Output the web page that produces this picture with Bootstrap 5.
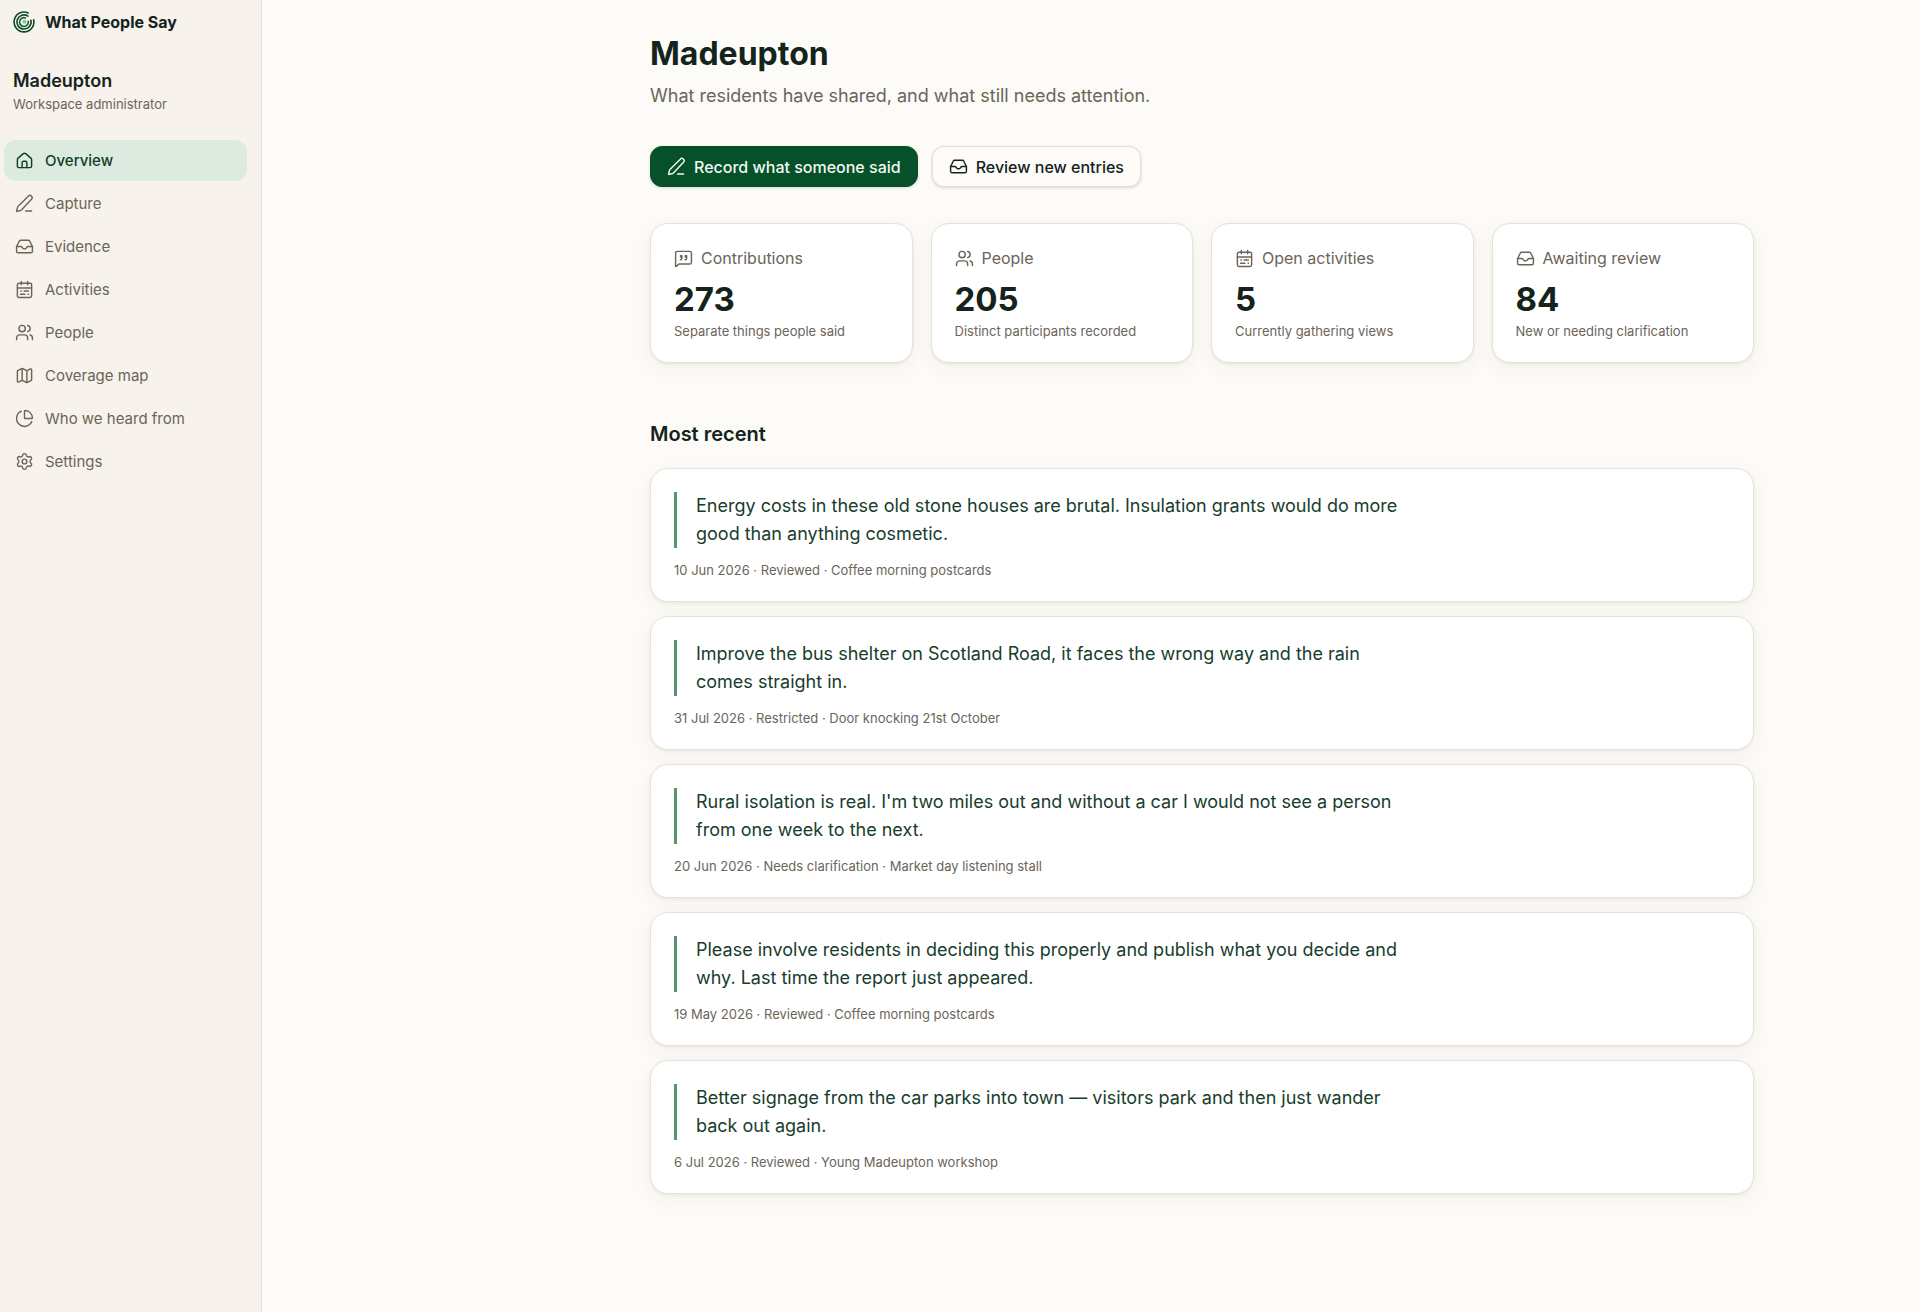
<!DOCTYPE html>
<html lang="en">
<head>
<meta charset="utf-8">
<meta name="viewport" content="width=device-width, initial-scale=1">
<title>Madeupton · What People Say</title>
<link href="https://cdn.jsdelivr.net/npm/bootstrap@5.3.0/dist/css/bootstrap.min.css" rel="stylesheet">
<style>
:root{--ink:#14231b;--muted-ink:#6b6459;--line:#ebe0d8;--paper:#fcfbf7;--sand:#f7f2eb;--leaf:#06502a}
body{font-family:Inter,"Liberation Sans",sans-serif;font-size:16px;line-height:24px;color:var(--ink);background:var(--paper)}
.ico{width:19px;height:19px;flex:none;fill:none;stroke:currentColor;stroke-width:1.8;stroke-linecap:round;stroke-linejoin:round}
.side{width:262px;flex:none;background:var(--sand);border-right:1px solid var(--line);padding:11px 14px 24px 4px}
.brand{gap:10px;padding-left:9px;font-weight:700;line-height:22px;color:var(--ink);text-decoration:none}
.brand svg{width:22px;height:22px;flex:none}
.workspace{margin:36px 0 25px;padding-left:9px}
.workspace-name{font-size:18px;font-weight:600;line-height:24px}
.workspace-role{font-size:13px;line-height:22px;color:var(--muted-ink)}
.side .nav{gap:2px}
.side .nav-link{display:flex;align-items:center;gap:11px;height:41px;padding:0 11px;border-radius:12px;font-size:15px;color:var(--muted-ink)}
.side .nav-link.active{background:#dceadf;color:#0f4027;font-weight:500}
.page{padding:34px 0 48px 222px}
.page-inner{max-width:1104px}
h1{font-size:32px;line-height:40px;font-weight:700;margin:0 0 8px}
.intro{font-size:18px;line-height:28px;color:var(--muted-ink);margin:0 0 36px}
.actions{gap:14px;margin-bottom:36px}
.actions .btn{display:flex;align-items:center;gap:8px;height:41px;padding:0 16px;border-radius:12px;font-size:16px;font-weight:500;box-shadow:0 1px 3px rgba(60,45,30,.18)}
.btn-leaf,.btn-leaf:hover{background:var(--leaf);border-color:var(--leaf);color:#f2f8f2}
.btn-plain,.btn-plain:hover{background:#fdfcf9;border-color:#e7dcd3;color:var(--ink)}
.stats{display:grid;grid-template-columns:repeat(4,1fr);gap:18px}
.tile{border:1px solid var(--line);border-radius:18px;background:#fff;box-shadow:0 1px 3px rgba(80,60,40,.08),0 6px 20px rgba(80,60,40,.05);padding:22px 23px 21px}
.tile-label{gap:8px;color:var(--muted-ink);margin-bottom:9px}
.tile-number{font-size:33px;line-height:40px;font-weight:700;margin-bottom:2px}
.fine{font-size:13px;line-height:20px;color:var(--muted-ink);margin:0}
h2{font-size:20px;line-height:28px;font-weight:600;margin:57px 0 20px}
.entries{gap:14px}
.quote{max-width:732px;margin:0 0 12px;padding-left:19px;border-left:3px solid #55946a;font-size:18px;line-height:28px;color:#173d2b}
.entries .tile{padding-top:23px}
@media(max-width:1600px){.page{padding-left:24px;padding-right:24px}}
@media(max-width:991px){.stats{grid-template-columns:repeat(2,1fr)}}
</style>
</head>
<body>
<svg class="d-none" aria-hidden="true">
  <symbol id="home" viewBox="0 0 24 24"><path d="M3 11a2.6 2.6 0 0 1 .9-2l6.2-5.4a2.9 2.9 0 0 1 3.8 0L20.100 9a2.6 2.6 0 0 1 .9 2v8a2 2 0 0 1-2 2H5a2 2 0 0 1-2-2z"/><path d="M9 21v-6a2 2 0 0 1 2-2h2a2 2 0 0 1 2 2v6"/></symbol>
  <symbol id="pen" viewBox="0 0 24 24"><path d="M13.500 21.500H21"/><path d="M20.800 6.700a2.800 2.800 0 0 0-4-4L4 15.600a3 3 0 0 0-.8 1.300L2 21.400a.5.5 0 0 0 .6.6l4.500-1.200a3 3 0 0 0 1.300-.8z"/></symbol>
  <symbol id="inbox" viewBox="0 0 24 24"><path d="M22 12h-5.500a1.500 1.500 0 0 0-1.200.6l-1.100 1.500a2 2 0 0 1-1.600.8h-1.200a2 2 0 0 1-1.600-.8l-1.100-1.500a1.500 1.500 0 0 0-1.200-.6H2"/><path d="M5.500 5.100 2 12v6a2 2 0 0 0 2 2h16a2 2 0 0 0 2-2v-6l-3.500-6.900A2 2 0 0 0 16.800 4H7.200a2 2 0 0 0-1.700 1.100z"/></symbol>
  <symbol id="calendar" viewBox="0 0 24 24"><rect x="3" y="4" width="18" height="18" rx="2"/><path d="M8 2v4M16 2v4M3 10h18M7.500 14h.5M11.500 14h5.500M7 18h5.500M16.500 18h.5"/></symbol>
  <symbol id="people" viewBox="0 0 24 24"><path d="M16 21v-2a4 4 0 0 0-4-4H6a4 4 0 0 0-4 4v2"/><circle cx="9" cy="7" r="4"/><path d="M16 3.100a4 4 0 0 1 0 7.800M22 21v-2a4 4 0 0 0-3-3.900"/></symbol>
  <symbol id="map" viewBox="0 0 24 24"><path d="M14.100 5.600a2 2 0 0 0 1.800 0l3.700-1.900A1 1 0 0 1 21 4.600v12.800a1 1 0 0 1-.6.900l-4.500 2.300a2 2 0 0 1-1.800 0l-4.200-2.100a2 2 0 0 0-1.800 0l-3.700 1.800a1 1 0 0 1-1.400-.9V6.600a1 1 0 0 1 .6-.9l4.500-2.300a2 2 0 0 1 1.800 0zM15 5.800v15M9 3.200v15"/></symbol>
  <symbol id="pie" viewBox="0 0 24 24"><path d="M21 12a1 1 0 0 0 1-1A10 10 0 0 0 13 2a1 1 0 0 0-1 1v8a1 1 0 0 0 1 1z"/><path d="M21.200 15.900A10 10 0 1 1 8 2.800"/></symbol>
  <symbol id="cog" viewBox="0 0 24 24"><path d="M9.671 4.136a2.340 2.340 0 0 1 4.659 0 2.340 2.340 0 0 0 3.319 1.915 2.340 2.340 0 0 1 2.330 4.033 2.340 2.340 0 0 0 0 3.831 2.340 2.340 0 0 1-2.330 4.033 2.340 2.340 0 0 0-3.319 1.915 2.340 2.340 0 0 1-4.659 0 2.340 2.340 0 0 0-3.320-1.915 2.340 2.340 0 0 1-2.330-4.033 2.340 2.340 0 0 0 0-3.831A2.340 2.340 0 0 1 6.350 6.051a2.340 2.340 0 0 0 3.319-1.915"/><circle cx="12" cy="12" r="3"/></symbol>
  <symbol id="quote" viewBox="0 0 24 24"><path d="M22 17a2 2 0 0 1-2 2H6.800a2 2 0 0 0-1.400.6l-2.200 2.200A.7.7 0 0 1 2 21.300V5a2 2 0 0 1 2-2h16a2 2 0 0 1 2 2z"/><path d="M8 13.500c1.700 0 2-1.200 2-2.500V8.500H8.200V10H10M14 13.500c1.700 0 2-1.200 2-2.500V8.500h-1.800V10H16"/></symbol>
</svg>

<div class="d-flex align-items-stretch min-vh-100">
  <aside class="side">
    <a class="brand d-flex align-items-center" href="#">
      <svg viewBox="0 0 22 22" fill="none" stroke-width="1.600" stroke-linecap="round" aria-hidden="true">
        <path stroke="#0d4a2c" d="M15.200 2A9.900 9.900 0 1 0 20.700 8.900"/>
        <path stroke="#0d4a2c" d="M15 5.100A7.100 7.100 0 1 0 17.900 9.300"/>
        <path stroke="#17633b" d="M12.500 6.900A4.400 4.400 0 1 0 15.300 10.200"/>
        <circle cx="11.500" cy="10.800" r="2" fill="#7fcf8b"/>
      </svg>
      What People Say
    </a>
    <div class="workspace">
      <div class="workspace-name">Madeupton</div>
      <div class="workspace-role">Workspace administrator</div>
    </div>
    <nav class="nav flex-column" aria-label="Workspace">
      <a class="nav-link active" aria-current="page" href="#"><svg class="ico"><use href="#home"/></svg>Overview</a>
      <a class="nav-link" href="#"><svg class="ico"><use href="#pen"/></svg>Capture</a>
      <a class="nav-link" href="#"><svg class="ico"><use href="#inbox"/></svg>Evidence</a>
      <a class="nav-link" href="#"><svg class="ico"><use href="#calendar"/></svg>Activities</a>
      <a class="nav-link" href="#"><svg class="ico"><use href="#people"/></svg>People</a>
      <a class="nav-link" href="#"><svg class="ico"><use href="#map"/></svg>Coverage map</a>
      <a class="nav-link" href="#"><svg class="ico"><use href="#pie"/></svg>Who we heard from</a>
      <a class="nav-link" href="#"><svg class="ico"><use href="#cog"/></svg>Settings</a>
    </nav>
  </aside>

  <main class="page flex-grow-1">
    <div class="page-inner mx-auto">
      <h1>Madeupton</h1>
      <p class="intro">What residents have shared, and what still needs attention.</p>
      <div class="actions d-flex flex-wrap">
        <button type="button" class="btn btn-leaf"><svg class="ico"><use href="#pen"/></svg>Record what someone said</button>
        <button type="button" class="btn btn-plain"><svg class="ico"><use href="#inbox"/></svg>Review new entries</button>
      </div>

      <section class="stats" aria-label="Totals">
        <div class="tile">
          <div class="tile-label d-flex align-items-center"><svg class="ico"><use href="#quote"/></svg>Contributions</div>
          <div class="tile-number">273</div>
          <p class="fine">Separate things people said</p>
        </div>
        <div class="tile">
          <div class="tile-label d-flex align-items-center"><svg class="ico"><use href="#people"/></svg>People</div>
          <div class="tile-number">205</div>
          <p class="fine">Distinct participants recorded</p>
        </div>
        <div class="tile">
          <div class="tile-label d-flex align-items-center"><svg class="ico"><use href="#calendar"/></svg>Open activities</div>
          <div class="tile-number">5</div>
          <p class="fine">Currently gathering views</p>
        </div>
        <div class="tile">
          <div class="tile-label d-flex align-items-center"><svg class="ico"><use href="#inbox"/></svg>Awaiting review</div>
          <div class="tile-number">84</div>
          <p class="fine">New or needing clarification</p>
        </div>
      </section>

      <h2>Most recent</h2>
      <div class="entries d-flex flex-column">
        <article class="tile">
          <blockquote class="quote">Energy costs in these old stone houses are brutal. Insulation grants would do more good than anything cosmetic.</blockquote>
          <p class="fine">10 Jun 2026 · Reviewed · Coffee morning postcards</p>
        </article>
        <article class="tile">
          <blockquote class="quote">Improve the bus shelter on Scotland Road, it faces the wrong way and the rain comes straight in.</blockquote>
          <p class="fine">31 Jul 2026 · Restricted · Door knocking 21st October</p>
        </article>
        <article class="tile">
          <blockquote class="quote">Rural isolation is real. I'm two miles out and without a car I would not see a person from one week to the next.</blockquote>
          <p class="fine">20 Jun 2026 · Needs clarification · Market day listening stall</p>
        </article>
        <article class="tile">
          <blockquote class="quote">Please involve residents in deciding this properly and publish what you decide and why. Last time the report just appeared.</blockquote>
          <p class="fine">19 May 2026 · Reviewed · Coffee morning postcards</p>
        </article>
        <article class="tile">
          <blockquote class="quote">Better signage from the car parks into town — visitors park and then just wander back out again.</blockquote>
          <p class="fine">6 Jul 2026 · Reviewed · Young Madeupton workshop</p>
        </article>
      </div>
    </div>
  </main>
</div>
<script src="https://cdn.jsdelivr.net/npm/bootstrap@5.3.0/dist/js/bootstrap.bundle.min.js"></script>
</body>
</html>
